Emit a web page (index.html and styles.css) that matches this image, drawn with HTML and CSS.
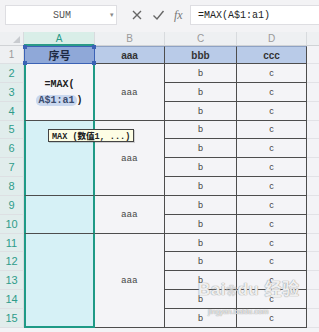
FILE: index.html
```html
<!DOCTYPE html>
<html>
<head>
<meta charset="utf-8">
<link rel="stylesheet" href="styles.css">
</head>
<body>
<div class="app">
  <div class="toolbar">
    <div class="namebox"><span class="name">SUM</span><span class="drop">▾</span></div>
    <div class="tools">
      <svg class="ic" width="12" height="12" viewBox="0 0 12 12"><path d="M2 2L10 10M10 2L2 10" stroke="#666" stroke-width="1.4" fill="none"/></svg>
      <svg class="ic" width="13" height="12" viewBox="0 0 13 12"><path d="M1.5 6.5L5 10L11.5 2" stroke="#666" stroke-width="1.4" fill="none"/></svg>
      <span class="fx">fx</span>
    </div>
    <div class="formula">=MAX(A$1:a1)</div>
  </div>

  <div class="sheet">
    <div class="corner"><span class="tri"></span></div>
    <div class="ch sel">A</div>
    <div class="ch">B</div>
    <div class="ch">C</div>
    <div class="ch">D</div>
    <div class="ch e"></div>

    <div class="rh">1</div>
    <div class="c hdr a1">序号<i class="h tl"></i><i class="h tr"></i><i class="h bl"></i><i class="h br"></i></div>
    <div class="c hdr">aaa</div>
    <div class="c hdr">bbb</div>
    <div class="c hdr">ccc</div>
    <div class="c e"></div>

    <div class="rh s">2</div>
    <div class="c colA edit span3"><div class="fm">=MAX(<br><span class="ref">A$1:a1</span>)</div></div>
    <div class="c txt span3">aaa</div>
    <div class="c">b</div><div class="c">c</div><div class="c e"></div>

    <div class="rh s">3</div>
    <div class="c">b</div><div class="c">c</div><div class="c e"></div>

    <div class="rh s">4</div>
    <div class="c">b</div><div class="c">c</div><div class="c e"></div>

    <div class="rh s">5</div>
    <div class="c colA span4"></div>
    <div class="c txt span4">aaa</div>
    <div class="c">b</div><div class="c">c</div><div class="c e"></div>

    <div class="rh s">6</div>
    <div class="c">b</div><div class="c">c</div><div class="c e"></div>
    <div class="rh s">7</div>
    <div class="c">b</div><div class="c">c</div><div class="c e"></div>
    <div class="rh s">8</div>
    <div class="c">b</div><div class="c">c</div><div class="c e"></div>

    <div class="rh s">9</div>
    <div class="c colA span2"></div>
    <div class="c txt span2">aaa</div>
    <div class="c">b</div><div class="c">c</div><div class="c e"></div>
    <div class="rh s">10</div>
    <div class="c">b</div><div class="c">c</div><div class="c e"></div>

    <div class="rh s">11</div>
    <div class="c colA last span5"></div>
    <div class="c txt span5">aaa</div>
    <div class="c">b</div><div class="c">c</div><div class="c e"></div>
    <div class="rh s">12</div>
    <div class="c">b</div><div class="c">c</div><div class="c e"></div>
    <div class="rh s">13</div>
    <div class="c">b</div><div class="c">c</div><div class="c e"></div>
    <div class="rh s">14</div>
    <div class="c">b</div><div class="c">c</div><div class="c e"></div>
    <div class="rh s">15</div>
    <div class="c">b</div><div class="c">c</div><div class="c e"></div>

    <div class="tip">MAX (<b>数值</b>1, ...)</div>
    <div class="wm"><div class="wm1">Bai<span class="paw">❀</span>du 经验</div><div class="wm2">jingyan.baidu.com</div></div>
  </div>
</div>
</body>
</html>
```
FILE: styles.css
```css
* { box-sizing: border-box; }
html, body { margin: 0; padding: 0; }
body {
  width: 319px; height: 332px; overflow: hidden;
  background: #f3f3f6;
  font-family: "Liberation Sans", Arial, sans-serif;
  color: #333;
}
.app { display: flex; flex-direction: column; }

.toolbar {
  height: 32px;
  display: flex; align-items: center;
  padding: 0 0 2px 5px;
  background: #f3f3f5;
}
.namebox {
  width: 112px; height: 20px;
  background: #fff; border: 1px solid #dedee2;
  display: flex; align-items: center;
  padding: 0 2px 0 0;
}
.name {
  flex: 1; text-align: center;
  font-family: "Liberation Mono", monospace; font-size: 10px; color: #555;
  padding-left: 8px;
}
.drop { font-size: 7px; color: #888; }
.tools {
  width: 73px; display: flex; align-items: center; gap: 0;
  padding-left: 14px;
}
.ic { margin-right: 9px; }
.fx {
  font-family: "Liberation Serif", serif; font-style: italic;
  font-size: 12px; color: #777;
}
.formula {
  flex: 1; height: 20px;
  background: #fff; border: 1px solid #dedee2; border-right: none;
  display: flex; align-items: center;
  padding-left: 7px;
  font-family: "Liberation Mono", monospace; font-size: 10px; color: #222;
}

.sheet {
  position: relative;
  display: grid;
  grid-template-columns: 24px 71px 70px 72px 70px 1fr;
  grid-template-rows: 14px 18px repeat(14, 18.85px);
}
.corner {
  background: #eef0f2; border-right: 1px solid #d8dbde; border-bottom: 1px solid #d0d3d6;
  position: relative;
}
.tri {
  position: absolute; right: 3px; bottom: 2px;
  width: 0; height: 0;
  border-left: 7px solid transparent; border-bottom: 7px solid #c8cbcf;
}
.ch {
  background: #eef0f2;
  border-right: 1px solid #d8dbde; border-bottom: 1px solid #d0d3d6;
  font-size: 10px; color: #9a9a9a;
  display: flex; align-items: center; justify-content: center;
}
.ch.sel { background: #d9eee8; color: #2a9a88; border-bottom: 2px solid #2a9a88; }
.ch.e { border-right: none; }
.rh {
  background: #eef0f2;
  border-right: 1px solid #d8dbde; border-bottom: 1px solid #dde0e3;
  font-size: 10px; color: #9a9a9a;
  display: flex; align-items: center; justify-content: center;
}
.rh.s { background: #e1edec; color: #2e9c8a; font-size: 11px; }

.c {
  background: #f4f4f7;
  border-right: 1px solid #4d4d4d; border-bottom: 1px solid #4d4d4d;
  font-size: 9px; color: #444;
  display: flex; align-items: center; justify-content: center;
}
.c.e { border-right: none; border-bottom: 1px solid #e2e2e6; background: #f3f3f6; }
.c.hdr {
  background: #b9cbe8; font-weight: bold; font-size: 10px; color: #333;
  border-top: 1px solid #8ea2c4;
}
.c.a1 {
  position: relative;
  background: #8fa8d8; color: #1e2a44;
  border: 1px solid #3b62b5;
  font-family: "Noto Sans CJK SC", sans-serif; font-size: 11px;
}
.h { position: absolute; width: 4px; height: 4px; background: #3b62b5; }
.tl { left: -2px; top: -2px; } .tr { right: -2px; top: -2px; }
.bl { left: -2px; bottom: -2px; } .br { right: -2px; bottom: -2px; }

.txt { letter-spacing: 0.5px; }
.span2 { grid-row: span 2; }
.span3 { grid-row: span 3; }
.span4 { grid-row: span 4; }
.span5 { grid-row: span 5; }

.colA {
  background: #d6f1f6;
  border-left: 2px solid #1f9a86; border-right: 2px solid #1f9a86;
}
.colA.edit { background: #f5f5f8; }
.colA.last { border-bottom: 2px solid #1f9a86; }

.fm {
  font-family: "Liberation Mono", monospace; font-weight: bold;
  font-size: 10px; line-height: 16px; color: #222;
  text-align: center; margin-top: 2px;
}
.fm .ref { background: #c9d7ee; border-radius: 5px; padding: 0 2px; color: #3b4c6e; }

.tip {
  position: absolute; left: 48px; top: 97px;
  height: 13px; padding: 0 3px;
  background: #fdfde4; border: 1px solid #444;
  font-family: "Liberation Mono", "Noto Sans CJK SC", monospace;
  font-size: 8.5px; font-weight: bold; line-height: 11px; color: #222;
  box-shadow: 1px 1px 0 rgba(0,0,0,0.15);
  white-space: nowrap;
}
.tip b { font-family: "Noto Sans CJK SC", sans-serif; }

.wm {
  position: absolute; left: 198px; top: 248px;
  color: rgba(255,255,255,0.85);
  text-shadow: 0 0 1px #9a9a9a, 0 0 1px #9a9a9a;
  pointer-events: none;
}
.wm1 { font-family: "Liberation Sans", "Noto Sans CJK SC", sans-serif; font-size: 17px; font-weight: bold; letter-spacing: 0.5px; line-height: 20px; }
.paw { font-size: 11px; }
.wm2 { font-size: 7.5px; margin-left: 10px; margin-top: 6px; }
```
